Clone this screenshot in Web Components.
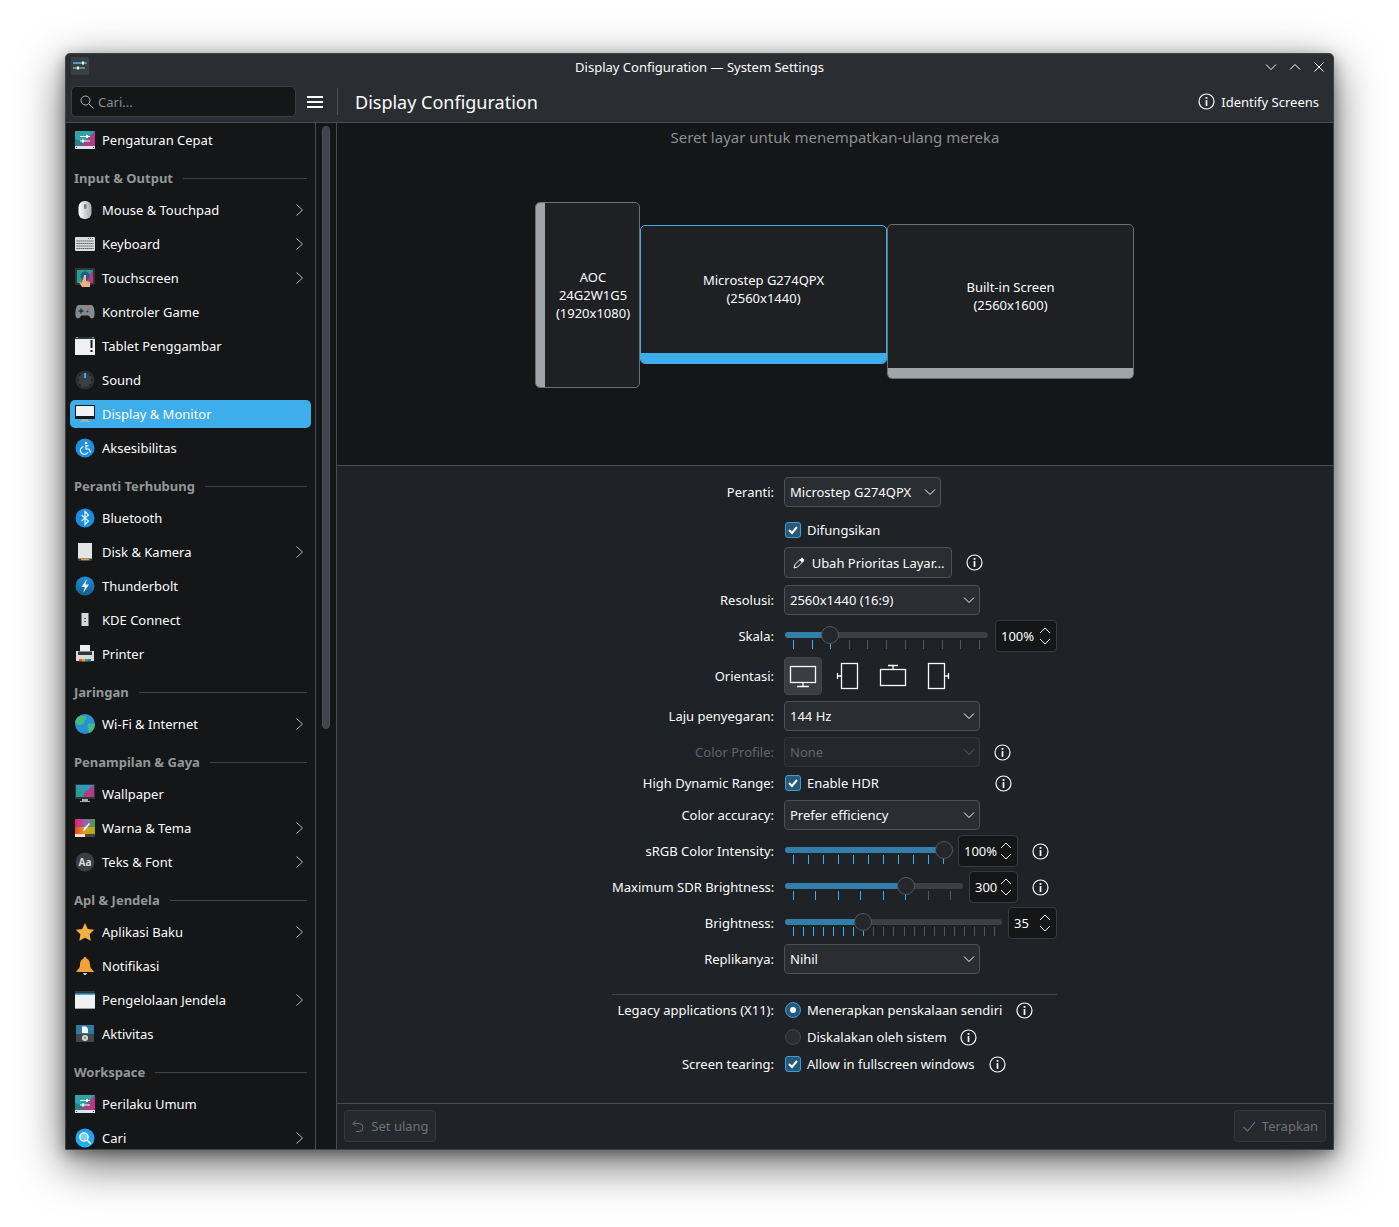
<!DOCTYPE html>
<html lang="id">
<head>
<meta charset="utf-8">
<title>Display Configuration — System Settings</title>
<style>
html, body { margin: 0; background: #fff; }
body {
	width: 1399px;
	height: 1227px;
	overflow: hidden;
	padding: 53px 0 0 65px;
	box-sizing: border-box;
	font-family: "Noto Sans", sans-serif;
	font-size: 13px;
	color: #fcfcfc;
}
</style>
</head>
<body>
<kde-window>
	<kde-sidebar slot="sidebar">
		<side-item icon="quick">Pengaturan Cepat</side-item>
		<side-header>Input &amp; Output</side-header>
		<side-item icon="mouse" arrow>Mouse &amp; Touchpad</side-item>
		<side-item icon="keyboard" arrow>Keyboard</side-item>
		<side-item icon="touch" arrow>Touchscreen</side-item>
		<side-item icon="game">Kontroler Game</side-item>
		<side-item icon="tablet">Tablet Penggambar</side-item>
		<side-item icon="sound">Sound</side-item>
		<side-item icon="display" active>Display &amp; Monitor</side-item>
		<side-item icon="a11y">Aksesibilitas</side-item>
		<side-header>Peranti Terhubung</side-header>
		<side-item icon="bluetooth">Bluetooth</side-item>
		<side-item icon="disk" arrow>Disk &amp; Kamera</side-item>
		<side-item icon="thunder">Thunderbolt</side-item>
		<side-item icon="phone">KDE Connect</side-item>
		<side-item icon="printer">Printer</side-item>
		<side-header>Jaringan</side-header>
		<side-item icon="globe" arrow>Wi-Fi &amp; Internet</side-item>
		<side-header>Penampilan &amp; Gaya</side-header>
		<side-item icon="wallpaper">Wallpaper</side-item>
		<side-item icon="colors" arrow>Warna &amp; Tema</side-item>
		<side-item icon="fonts" arrow>Teks &amp; Font</side-item>
		<side-header>Apl &amp; Jendela</side-header>
		<side-item icon="star" arrow>Aplikasi Baku</side-item>
		<side-item icon="bell">Notifikasi</side-item>
		<side-item icon="window" arrow>Pengelolaan Jendela</side-item>
		<side-item icon="activities">Aktivitas</side-item>
		<side-header>Workspace</side-header>
		<side-item icon="quick">Perilaku Umum</side-item>
		<side-item icon="search" arrow>Cari</side-item>
	</kde-sidebar>

	<screen-view slot="view">
		<screen-tile style="left:198px;top:79px;width:105px;height:186px" bar="left">AOC<br>24G2W1G5<br>(1920x1080)</screen-tile>
		<screen-tile style="left:303px;top:102px;width:247px;height:139px" bar="bottom" selected>Microstep G274QPX<br>(2560x1440)</screen-tile>
		<screen-tile style="left:550px;top:101px;width:247px;height:155px" bar="bottom">Built-in Screen<br>(2560x1600)</screen-tile>
	</screen-view>

	<form-grid slot="form">
		<form-row label="Peranti:" h="30" top="12"><combo-box w="157">Microstep G274QPX</combo-box></form-row>
		<form-row h="18" top="14"><check-mark>Difungsikan</check-mark></form-row>
		<form-row h="31" top="8"><push-button w="168" icon="pencil">Ubah Prioritas Layar...</push-button><info-icon style="margin-left:14px"></info-icon></form-row>
		<form-row label="Resolusi:" h="30" top="7"><combo-box w="196">2560x1440 (16:9)</combo-box></form-row>
		<form-row label="Skala:" h="31" top="5"><tick-slider w="203" pos="45" ticks="11" blue="3" pad="8"></tick-slider><spin-box w="62" style="margin-left:7px">100%</spin-box></form-row>
		<form-row label="Orientasi:" h="38" top="6"><orient-buttons></orient-buttons></form-row>
		<form-row label="Laju penyegaran:" h="30" top="6"><combo-box w="196">144 Hz</combo-box></form-row>
		<form-row label="Color Profile:" h="30" top="6" disabled><combo-box w="196" disabled>None</combo-box><info-icon style="margin-left:14px"></info-icon></form-row>
		<form-row label="High Dynamic Range:" h="18" top="7"><check-mark style="width:196px">Enable HDR</check-mark><info-icon style="margin-left:15px"></info-icon></form-row>
		<form-row label="Color accuracy:" h="30" top="8"><combo-box w="196">Prefer efficiency</combo-box></form-row>
		<form-row label="sRGB Color Intensity:" h="32" top="5"><tick-slider w="167" pos="159" ticks="11" blue="11" pad="8"></tick-slider><spin-box w="60" style="margin-left:6px">100%</spin-box><info-icon style="margin-left:14px"></info-icon></form-row>
		<form-row label="Maximum SDR Brightness:" h="32" top="4"><tick-slider w="178" pos="121" ticks="8" blue="6" pad="12"></tick-slider><spin-box w="49" style="margin-left:6px">300</spin-box><info-icon style="margin-left:14px"></info-icon></form-row>
		<form-row label="Brightness:" h="32" top="4"><tick-slider w="217" pos="78" ticks="21" blue="8" pad="7"></tick-slider><spin-box w="49" style="margin-left:6px">35</spin-box></form-row>
		<form-row label="Replikanya:" h="30" top="5"><combo-box w="196">Nihil</combo-box></form-row>
		<form-sep></form-sep>
		<form-row label="Legacy applications (X11):" h="18" top="6"><radio-mark checked>Menerapkan penskalaan sendiri</radio-mark><info-icon style="margin-left:14px"></info-icon></form-row>
		<form-row h="18" top="9"><radio-mark>Diskalakan oleh sistem</radio-mark><info-icon style="margin-left:13px"></info-icon></form-row>
		<form-row label="Screen tearing:" h="18" top="9"><check-mark>Allow in fullscreen windows</check-mark><info-icon style="margin-left:14px"></info-icon></form-row>
	</form-grid>

	<push-button slot="reset" w="92" h="32" icon="undo" disabled>Set ulang</push-button>
	<push-button slot="apply" w="92" h="32" icon="check" disabled>Terapkan</push-button>
</kde-window>

<script>
// flat 20x20 versions of the Breeze category icons
const ICONS = {
	quick: `<path d="M0 1h20v15H0z" fill="#2b7f88"/><path d="M0 1h20L9 12 0 9z" fill="#2fa3a8"/><path d="M20 1v15H7z" fill="#b23a86"/><path d="M0 16h20v3H0z" fill="#dfe3e3"/><path d="M1 17.500h1M18 17.500h1" stroke="#44484c"/><path d="M5 6.500h10M5 11h10" stroke="#fff" stroke-width="1.100"/><path d="M11 5h2v3h-2zM7 9.500h2v3H7z" fill="#fff"/>`,
	mouse: `<defs><linearGradient id="m" x1="0" x2="1"><stop offset="0" stop-color="#fff"/><stop offset="1" stop-color="#a7abaf"/></linearGradient></defs><rect x="3.500" y="1" width="13" height="18" rx="6" fill="url(#m)"/><rect x="9" y="4" width="2.500" height="5" rx="1.200" fill="#7b8084"/>`,
	keyboard: `<rect y="3" width="20" height="14" rx="1" fill="#d9dcdd"/><path d="M1.500 7h17M1.500 9.500h17M1.500 12h17M1.500 14.500h17" stroke="#44484c" stroke-width="1" stroke-dasharray="1.300 .7"/><path d="M13 4.500h5" stroke="#3d8c7c" stroke-dasharray="1 1"/>`,
	touch: `<rect y="0" width="20" height="17" rx="1" fill="#31363b"/><path d="M2 2h16v13H2z" fill="#2a9d92"/><path d="M18 2v13H9z" fill="#b23a86"/><circle cx="10" cy="8" r="4.500" fill="#1d5f7a"/><path d="M9 7h2v6l4 1v5H7l-3-5 3 1z" fill="#f0b184"/>`,
	game: `<path d="M4 3h12c2 0 3 2 3.500 6.500.4 3.500-.3 7-2.500 7-2 0-2.500-3-4-3H7c-1.500 0-2 3-4 3-2.200 0-2.900-3.500-2.500-7C1 5 2 3 4 3z" fill="#858a8e"/><path d="M3.500 9h5M6 6.500v5" stroke="#2b2e31" stroke-width="1.400"/><circle cx="14" cy="6.500" r="1.200" fill="#d05a5a"/><circle cx="16.300" cy="9" r="1.200" fill="#4aa3d8"/><circle cx="12.500" cy="9.500" r="1" fill="#333"/>`,
	tablet: `<path d="M0 1h20v18H0z" fill="#eef0f1"/><path d="M0 1h20v2H0z" fill="#31363b"/><path d="M1 1h2v1H1zM17 1h2v1h-2z" fill="#3daee9"/><path d="M15.500 4h2v8h-2zM15.500 14h2v2h-2z" fill="#16181a"/>`,
	sound: `<circle cx="10" cy="10" r="9.500" fill="#2d3136"/><circle cx="10" cy="10" r="7" fill="#3a3f45"/><rect x="9" y="3" width="2" height="5" fill="#3daee9"/><path d="M3.500 10h.01M16.500 10h.01M5 5h.01M15 5h.01M5 15h.01M15 15h.01" stroke="#16181a" stroke-width="1.600" stroke-linecap="round"/>`,
	display: `<path d="M0 1h20v14H0z" fill="#16181a"/><path d="M1 2h18v10H1z" fill="#eff3f5"/><path d="M7 15h6v2h2v1H5v-1h2z" fill="#a8adb1"/>`,
	a11y: `<circle cx="10" cy="10" r="9.500" fill="#1f8fe0"/><circle cx="11" cy="5" r="1.300" fill="#fff"/><path d="M11 7v4h3l1.500 3.500M8.500 8.500a4 4 0 1 0 4.500 5.500M11 8.500l2.500-1" fill="none" stroke="#fff" stroke-width="1.100"/>`,
	bluetooth: `<circle cx="10" cy="10" r="9.500" fill="#1b8de0"/><path d="M6.500 7l7 6-3.500 3.500v-13L13.500 7l-7 6" fill="none" stroke="#e8f4fc" stroke-width="1.200"/>`,
	disk: `<path d="M3 1h14v18H3z" fill="#e3e5e6"/><path d="M3 16.500h14V19H3z" fill="#3a3e42"/><path d="M6 17h8v1.200H6z" fill="#f39c1f"/>`,
	thunder: `<defs><linearGradient id="t" y2="1" x2="0"><stop offset="0" stop-color="#1c8fdb"/><stop offset="1" stop-color="#155d8e"/></linearGradient></defs><circle cx="10" cy="10" r="9.500" fill="url(#t)"/><path d="M12 3 6.500 11H10l-2 6 6-8.500h-3.500z" fill="#fff"/>`,
	phone: `<path d="M5 1h10v18H5z" fill="#16181a"/><path d="M6.500 3h7v13h-7z" fill="#d5d8da"/><path d="M9 8h2v1h-2zM9 11h2v1H9z" fill="#555"/>`,
	printer: `<path d="M5 1h10v7H5z" fill="#eef0f1"/><path d="M1 7h18v10H1z" fill="#d8dbdc"/><path d="M3 7.500h14v3.500H3z" fill="#33373b"/><path d="M4 15h3v2.500H4z" fill="#e74c3c"/><path d="M7 15h3v2.500H7z" fill="#f39c1f"/><path d="M10 15h3v2.500h-3z" fill="#27ae60"/><path d="M13 15h3v2.500h-3z" fill="#2980b9"/>`,
	globe: `<circle cx="10" cy="10" r="10" fill="#2b8fd6"/><path d="M5 1.800C8 1 11 2 12 4c-1 2-3 2-3 4s-3 3-5 3-3-2-4-3c.500-2.500 2-4.800 5-6.200zM13 10c2-1 5-1 7 0 0 4-2 7-5 9-2-1-1-4-2-5s-1-3 0-4z" fill="#3fbf7f"/>`,
	wallpaper: `<path d="M0 0h20v15H0z" fill="#31363b"/><path d="M1 1h18v12H1z" fill="#2a9d92"/><path d="M1 1h18L8 8z" fill="#2d9ac4"/><path d="M19 1v12H8l2-5z" fill="#b23a86"/><path d="M7 15h6v2h2v1H5v-1h2z" fill="#a8adb1"/>`,
	colors: `<defs><linearGradient id="c" x2="1" y2="0"><stop offset="0" stop-color="#e91e63"/><stop offset=".5" stop-color="#9c5fb0"/><stop offset="1" stop-color="#3ea04f"/></linearGradient><linearGradient id="c2" x2="1" y2="0"><stop offset="0" stop-color="#e9432b"/><stop offset=".5" stop-color="#d8a520"/><stop offset="1" stop-color="#a0ad18"/></linearGradient></defs><path d="M0 1h20v8H0z" fill="url(#c)"/><path d="M0 9h20v7H0z" fill="url(#c2)"/><path d="M0 16h10v3H0z" fill="#fbe3c8"/><path d="M10 16h10v3H10z" fill="#4a4535"/><path d="M14 5l1 1-5 6-2 1 1-3z" fill="#fff"/>`,
	fonts: `<circle cx="10" cy="10" r="9.500" fill="#3a3e42"/><text x="10" y="13.500" text-anchor="middle" font-family="Noto Sans" font-weight="700" font-size="10" fill="#d8dadb">Aa</text>`,
	star: `<path d="M10 1l2.800 5.900 6.400.9-4.600 4.500 1.100 6.400L10 15.700l-5.700 3 1.100-6.400L.8 7.800l6.400-.9z" fill="#f5b042"/>`,
	bell: `<path d="M10 1c1 0 1.500.7 1.500 1.500C14 3.500 15 6 15 9c0 3 2 4.500 3.500 6v1h-17v-1C3 13.500 5 12 5 9c0-3 1-5.500 3.500-6.500C8.500 1.700 9 1 10 1z" fill="#eda338"/><path d="M8 17h4l-1 2H9z" fill="#c9ccce"/>`,
	window: `<path d="M0 1h20v18H0z" fill="#eef0f1"/><path d="M0 1h20v3H0z" fill="#33373b"/><path d="M0 3.500h20V5H0z" fill="#3daee9"/><path d="M0 18h20v1H0z" fill="#9a9ea1"/>`,
	activities: `<path d="M1 1h18v9H1z" fill="#2f7ba3"/><path d="M1 10h18v8H1z" fill="#43474b"/><path d="M7 2.500h4l2 2V9H7z" fill="#fff"/><circle cx="10" cy="14" r="3" fill="#d8dadb"/><path d="M9 12.500l2 1-1 2z" fill="#43474b"/>`,
	search: `<defs><linearGradient id="s" x2="0" y2="1"><stop offset="0" stop-color="#1f9bf0"/><stop offset="1" stop-color="#23b3f4"/></linearGradient></defs><circle cx="10" cy="10" r="9.500" fill="url(#s)"/><circle cx="9" cy="9" r="4.200" fill="#7fcff5" stroke="#fff" stroke-width="1.300"/><path d="M12 12l4 4" stroke="#fff" stroke-width="1.500"/>`
};

const INFO_SVG = `<svg width="17" height="17" viewBox="0 0 17 17" fill="none"><circle cx="8.500" cy="8.500" r="7.500" stroke="#fcfcfc" stroke-width="1.200"/><path d="M8.500 7v6" stroke="#fcfcfc" stroke-width="1.700"/><path d="M8.500 4v1.800" stroke="#fcfcfc" stroke-width="1.800"/></svg>`;

const chevron = (d, size = 12, color = '#fcfcfc') => `<svg width="${size}" height="${size}" viewBox="0 0 12 12" fill="none"><path d="${d}" stroke="${color}" stroke-width="1"/></svg>`;

// base class, keeps the components below short
class ShadowElement extends HTMLElement {
	constructor() {
		super();
		this.attachShadow({mode: 'open'});
	}
	connectedCallback() {
		this.shadowRoot.innerHTML = this.render();
	}
}

class KdeWindow extends ShadowElement {
	render() {
		return `<style>
:host {
	display: block;
	width: 1269px;
	height: 1097px;
	box-sizing: border-box;
	border: 1px solid #3f4347;
	border-radius: 5px 5px 1px 1px;
	background: #2a2e32;
	box-shadow: 0 14px 46px rgba(0,0,0,.6), 0 4px 14px rgba(0,0,0,.35);
	overflow: hidden;
}
.app { display: grid; grid-template-rows: 27px 42px 1fr; height: 100%; }
.titlebar { display: flex; align-items: center; justify-content: center; position: relative; background: #2a2e32; padding-bottom: 1px; box-sizing: border-box; }
.appicon { position: absolute; left: 5px; top: 3px; }
.winbtns { position: absolute; right: 8px; top: 7px; display: flex; gap: 12px; }
.toolbar { display: flex; align-items: center; border-bottom: 1px solid #4a4e52; box-sizing: border-box; }
.search {
	box-sizing: border-box;
	width: 225px;
	height: 31px;
	margin-left: 5px;
	background: #141618;
	border: 1px solid #3c4044;
	border-radius: 5px;
	display: flex;
	align-items: center;
	padding-left: 8px;
	gap: 4px;
	color: #8b8e91;
}
.burger { margin-left: 11px; width: 16px; height: 12px; border-top: 2px solid #fcfcfc; border-bottom: 2px solid #fcfcfc; box-sizing: border-box; position: relative; }
.burger::after { content: ""; position: absolute; left: 0; right: 0; top: 3px; height: 2px; background: #fcfcfc; }
.vsep { width: 1px; height: 27px; background: #4a4e52; margin-left: 14px; }
.heading { font-size: 18px; margin-left: 17px; flex: 1; }
.identify { display: flex; align-items: center; gap: 6px; margin-right: 14px; }
.identify svg { display: block; }
.body { display: grid; grid-template-columns: 249px 21px 1px 1fr; min-height: 0; background: #141618; }
.scroll { border-left: 1px solid #4a4e52; position: relative; }
.handle { position: absolute; left: 6px; top: 3px; width: 8px; height: 603px; border-radius: 4px; background: #414549; box-sizing: border-box; border: 1px solid #4c5054; }
.divider { background: #4a4e52; }
.main { display: grid; grid-template-rows: 342px 1fr 46px; min-height: 0; background: #1f2226; }
.footer { border-top: 1px solid #4a4e52; display: flex; justify-content: space-between; align-items: center; padding: 0 7px 1px; }
::slotted([slot=sidebar]) { min-height: 0; }
</style>
<div class="app">
	<div class="titlebar">
		<svg class="appicon" width="18" height="18" viewBox="0 0 18 18"><rect width="18" height="18" rx="1" fill="#3a3f44"/><path d="M2 6h14M2 11h12" stroke="#8fd0f2" stroke-width="1"/><path d="M2 6h9M2 11h4" stroke="#3daee9" stroke-width="1"/><rect x="11" y="4.500" width="2" height="3" fill="#fff"/><rect x="6" y="9.500" width="2" height="3" fill="#fff"/></svg>
		<span>Display Configuration — System Settings</span>
		<div class="winbtns">
			${chevron('M1 3.500l5 5 5-5')}
			${chevron('M1 8.500l5-5 5 5')}
			${chevron('M1.500 1.500l9 9M10.500 1.500l-9 9')}
		</div>
	</div>
	<div class="toolbar">
		<div class="search">
			<svg width="14" height="14" viewBox="0 0 14 14" fill="none"><circle cx="5.500" cy="5.500" r="4.500" stroke="#b5b8ba"/><path d="M9 9l4.500 4.500" stroke="#b5b8ba"/></svg>
			<span>Cari...</span>
		</div>
		<div class="burger"></div>
		<div class="vsep"></div>
		<div class="heading">Display Configuration</div>
		<div class="identify">${INFO_SVG}<span>Identify Screens</span></div>
	</div>
	<div class="body">
		<slot name="sidebar"></slot>
		<div class="scroll"><div class="handle"></div></div>
		<div class="divider"></div>
		<div class="main">
			<slot name="view"></slot>
			<slot name="form"></slot>
			<div class="footer"><slot name="reset"></slot><slot name="apply"></slot></div>
		</div>
	</div>
</div>`;
	}
}

class KdeSidebar extends ShadowElement {
	render() {
		return `<style>
:host { display: block; overflow: hidden; background: #141618; }
</style><slot></slot>`;
	}
}

class SideHeader extends ShadowElement {
	render() {
		return `<style>
:host { display: flex; align-items: center; height: 36px; box-sizing: border-box; padding: 6px 8px 0; font-weight: 700; color: #939699; }
i { flex: 1; height: 1px; background: #3f4347; margin-left: 10px; }
</style><slot></slot><i></i>`;
	}
}

class SideItem extends ShadowElement {
	render() {
		const arrow = this.hasAttribute('arrow') ? chevron('M2.500 .5l6 5.500-6 5.500', 12, '#b4b6b8') : '';
		const active = this.hasAttribute('active');
		return `<style>
:host { display: block; height: 34px; padding: 3px 4px; box-sizing: border-box; }
.row { display: flex; align-items: center; height: 28px; padding-left: 5px; padding-right: 5px; border-radius: 5px; background: ${active ? '#3daee9' : 'transparent'}; }
svg.ic { width: 20px; height: 20px; flex: none; margin-right: 7px; }
.t { flex: 1; white-space: nowrap; }
svg { display: block; }
</style>
<div class="row"><svg class="ic" viewBox="0 0 20 20">${ICONS[this.getAttribute('icon')]}</svg><span class="t"><slot></slot></span>${arrow}</div>`;
	}
}

class ScreenView extends ShadowElement {
	render() {
		return `<style>
:host { display: block; position: relative; background: #141618; border-bottom: 1px solid #4a4e52; box-sizing: border-box; height: 343px; }
.hint { text-align: center; font-size: 15px; color: #8c8f92; padding-top: 4px; }
</style>
<div class="hint">Seret layar untuk menempatkan-ulang mereka</div><slot></slot>`;
	}
}

class ScreenTile extends ShadowElement {
	render() {
		const sel = this.hasAttribute('selected');
		const barColor = sel ? '#3daee9' : '#a0a5aa';
		const left = this.getAttribute('bar') === 'left';
		return `<style>
:host {
	position: absolute;
	box-sizing: border-box;
	display: flex;
	flex-direction: ${left ? 'row' : 'column'};
	background: #1e2024;
	border: 1px solid ${sel ? '#3daee9' : '#6c7074'};
	border-radius: 5px;
	overflow: hidden;
	text-align: center;
	line-height: 18px;
}
.name { flex: 1; display: flex; align-items: center; justify-content: center; ${left ? 'padding-left: 2px' : 'padding-bottom: 2px'}; }
.bar { background: ${barColor}; flex: none; ${left ? 'width: 9px' : 'height: 10px'}; }
</style>
${left ? '<div class="bar"></div>' : ''}<div class="name"><div><slot></slot></div></div>${left ? '' : '<div class="bar"></div>'}`;
	}
}

class FormGrid extends ShadowElement {
	render() {
		return `<style>
:host { display: block; background: #1f2226; padding-left: 275px; min-height: 0; }
.col { width: 445px; }
</style><div class="col"><slot></slot></div>`;
	}
}

class FormRow extends ShadowElement {
	render() {
		const label = this.getAttribute('label') || '';
		return `<style>
:host { display: flex; align-items: center; height: ${this.getAttribute('h')}px; margin-top: ${this.getAttribute('top')}px; }
.label { flex: none; width: 162px; margin-right: 10px; text-align: right; white-space: nowrap; color: ${this.hasAttribute('disabled') ? '#63666a' : '#fcfcfc'}; }
.field { display: flex; align-items: center; flex: none; white-space: nowrap; }
</style><div class="label">${label}</div><div class="field"><slot></slot></div>`;
	}
}

class FormSep extends ShadowElement {
	render() {
		return `<style>:host { display: block; height: 1px; background: #43474b; margin-top: 20px; }</style>`;
	}
}

class ComboBox extends ShadowElement {
	render() {
		const dis = this.hasAttribute('disabled');
		return `<style>
:host {
	display: flex; align-items: center; justify-content: space-between;
	box-sizing: border-box; width: ${this.getAttribute('w')}px; height: 30px;
	padding: 0 4px 0 5px;
	background: ${dis ? '#24272b' : '#2a2d31'};
	border: 1px solid ${dis ? '#33363a' : '#4d5155'};
	border-radius: 4px;
	color: ${dis ? '#63666a' : '#fcfcfc'};
}
svg { display: block; }
</style><span><slot></slot></span>${chevron('M1 3.500l5 5 5-5', 12, dis ? '#63666a' : '#fcfcfc')}`;
	}
}

class PushButton extends ShadowElement {
	render() {
		const dis = this.hasAttribute('disabled');
		const color = dis ? '#6f7276' : '#fcfcfc';
		const glyphs = {
			pencil: `<path d="M2 12l1-3.500L8.500 3l2.500 2.500L5.500 11z" fill="none" stroke="#fcfcfc"/><path d="M7.500 4l2.500-2.500 2.500 2.500L10 6.500z" fill="#fcfcfc"/>`,
			undo: `<path d="M5 1.500 2 4.500l3 3M2.500 4.500H8a4 4 0 0 1 0 8H5" fill="none" stroke="${color}"/>`,
			check: `<path d="M1.500 8l4 4 7.500-9" fill="none" stroke="${color}" stroke-width="1.100"/>`
		};
		return `<style>
:host {
	display: flex; align-items: center; justify-content: center; gap: 6px;
	box-sizing: border-box; width: ${this.getAttribute('w')}px; height: ${this.getAttribute('h') || 31}px;
	background: ${dis ? '#26292d' : '#2a2d31'};
	border: 1px solid ${dis ? '#35383c' : '#4d5155'};
	border-radius: 4px;
	color: ${color};
	white-space: nowrap;
}
svg { display: block; flex: none; }
</style><svg width="14" height="14" viewBox="0 0 14 14">${glyphs[this.getAttribute('icon')]}</svg><span><slot></slot></span>`;
	}
}

class CheckMark extends ShadowElement {
	render() {
		return `<style>
:host { display: flex; align-items: center; padding-left: 1px; white-space: nowrap; box-sizing: border-box; }
.box { width: 16px; height: 16px; box-sizing: border-box; border: 1px solid #3d9ed6; border-radius: 3px; background: #275a78; margin-right: 6px; flex: none; }
svg { display: block; }
</style><div class="box"><svg width="14" height="14" viewBox="0 0 14 14" fill="none"><path d="M3 7l3 3 5-6" stroke="#fff" stroke-width="2"/></svg></div><slot></slot>`;
	}
}

class RadioMark extends ShadowElement {
	render() {
		const on = this.hasAttribute('checked');
		return `<style>
:host { display: flex; align-items: center; padding-left: 1px; white-space: nowrap; }
.dot { width: 16px; height: 16px; box-sizing: border-box; border-radius: 50%; margin-right: 6px; flex: none; display: flex; align-items: center; justify-content: center;
	border: 1px solid ${on ? '#3d9ed6' : '#43474b'}; background: ${on ? '#275a78' : '#2a2d31'}; }
.dot i { width: 6px; height: 6px; border-radius: 50%; background: #fff; display: ${on ? 'block' : 'none'}; }
</style><div class="dot"><i></i></div><slot></slot>`;
	}
}

class InfoIcon extends ShadowElement {
	render() {
		return `<style>:host { display: block; width: 17px; height: 17px; flex: none; } svg { display: block; }</style>${INFO_SVG}`;
	}
}

class SpinBox extends ShadowElement {
	render() {
		return `<style>
:host {
	display: flex; align-items: center; justify-content: space-between;
	box-sizing: border-box; width: ${this.getAttribute('w')}px; height: 32px;
	padding: 0 5px 0 5px;
	background: #141618;
	border: 1px solid #383b3f;
	border-radius: 4px;
	flex: none;
}
.arrows { display: flex; flex-direction: column; }
.arrows svg + svg { margin-top: -2px; }
svg { display: block; }
</style><span><slot></slot></span><div class="arrows">${chevron('M1 8l5-5 5 5')}${chevron('M1 4l5 5 5-5')}</div>`;
	}
}

class TickSlider extends ShadowElement {
	render() {
		const n = +this.getAttribute('ticks');
		const blue = +this.getAttribute('blue');
		const pos = +this.getAttribute('pos');
		const pad = +this.getAttribute('pad');
		let ticks = '';
		for (let i = 0; i < n; i++) {
			ticks += `<b style="background:${i < blue ? '#3daee9' : '#55585c'}"></b>`;
		}
		return `<style>
:host { display: block; position: relative; flex: none; width: ${this.getAttribute('w')}px; height: 30px; margin-left: 1px; }
.track { position: absolute; left: 0; right: 0; top: 11px; height: 6px; border-radius: 3px; background: #3c3f43; overflow: hidden; }
.fill { height: 100%; width: ${pos}px; background: #327fa9; }
.ticks { position: absolute; left: 8px; right: ${pad}px; top: 19px; display: flex; justify-content: space-between; }
b { display: block; width: 1px; height: 9px; }
.knob { position: absolute; left: ${pos - 9}px; top: 5px; width: 18px; height: 18px; box-sizing: border-box; border-radius: 50%; background: #24272b; border: 1px solid #55595d; }
</style><div class="track"><div class="fill"></div></div><div class="ticks">${ticks}</div><div class="knob"></div>`;
	}
}

class OrientButtons extends ShadowElement {
	render() {
		const s = 'fill="none" stroke="#fcfcfc" stroke-width="1.300"';
		return `<style>
:host { display: flex; gap: 6px; }
.b { width: 38px; height: 38px; border-radius: 4px; display: flex; align-items: center; justify-content: center; }
.on { background: #3a3e42; border: 1px solid #43474b; box-sizing: border-box; margin-right: 2px; }
svg { display: block; }
</style>
<div class="b on"><svg width="30" height="30" viewBox="0 0 30 30" ${s}><rect x="2.500" y="5.500" width="25" height="16"/><path d="M15 22v3M9 25.500h12"/></svg></div>
<div class="b"><svg width="30" height="30" viewBox="0 0 30 30" ${s}><rect x="7.500" y="2.500" width="16" height="25"/><path d="M7 15H4M3.500 12v6"/></svg></div>
<div class="b"><svg width="30" height="30" viewBox="0 0 30 30" ${s}><rect x="2.500" y="8.500" width="25" height="16"/><path d="M15 8V5M10 4.500h10"/></svg></div>
<div class="b"><svg width="30" height="30" viewBox="0 0 30 30" ${s}><rect x="6.500" y="2.500" width="16" height="25"/><path d="M23 15h3M26.500 12v6"/></svg></div>`;
	}
}

customElements.define('kde-window', KdeWindow);
customElements.define('kde-sidebar', KdeSidebar);
customElements.define('side-header', SideHeader);
customElements.define('side-item', SideItem);
customElements.define('screen-view', ScreenView);
customElements.define('screen-tile', ScreenTile);
customElements.define('form-grid', FormGrid);
customElements.define('form-row', FormRow);
customElements.define('form-sep', FormSep);
customElements.define('combo-box', ComboBox);
customElements.define('push-button', PushButton);
customElements.define('check-mark', CheckMark);
customElements.define('radio-mark', RadioMark);
customElements.define('info-icon', InfoIcon);
customElements.define('spin-box', SpinBox);
customElements.define('tick-slider', TickSlider);
customElements.define('orient-buttons', OrientButtons);
</script>
</body>
</html>
